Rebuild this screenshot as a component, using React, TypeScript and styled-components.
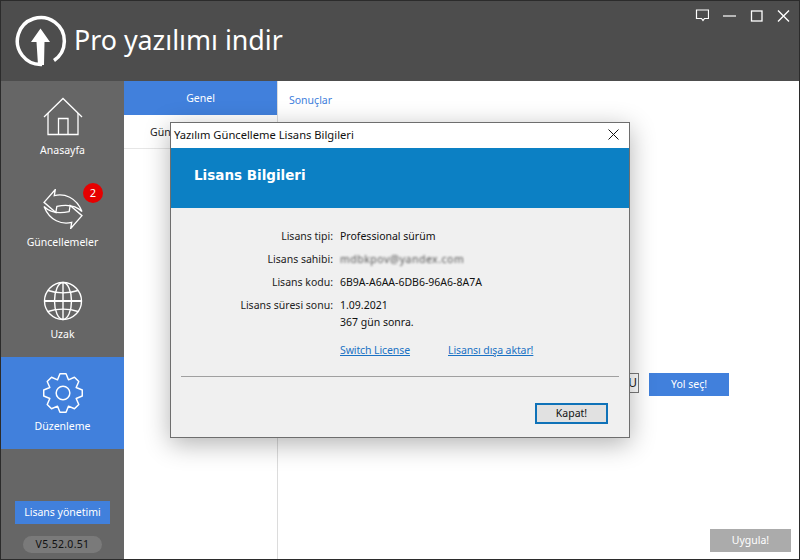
import styled, { createGlobalStyle } from "styled-components";

const GlobalStyle = createGlobalStyle`
    html, body {
        margin: 0;
        padding: 0;
        background: #fff;
    }
    * {
        box-sizing: border-box;
    }
`;

const Window = styled.div`
    position: relative;
    width: 800px;
    height: 560px;
    display: flex;
    flex-direction: column;
    border: 1px solid #2b2b2b;
    font-family: "Noto Sans", "Open Sans", sans-serif;
    font-size: 10.5px;
    overflow: hidden;
    background: #fff;
`;

const Header = styled.div`
    height: 80px;
    flex: none;
    background: #4d4d4d;
    display: flex;
    align-items: flex-start;
    padding: 14px 9px 0 14px;
`;

const AppTitle = styled.div`
    margin-left: 7px;
    margin-top: 3px;
    color: #fff;
    font-size: 26.8px;
    line-height: 44px;
`;

const WindowControls = styled.div`
    margin-left: auto;
    margin-top: -6px;
    display: flex;
    gap: 14px;
    align-items: center;
`;

const Body = styled.div`
    flex: 1;
    display: flex;
    min-height: 0;
`;

const Sidebar = styled.div`
    width: 123px;
    flex: none;
    background: #666666;
    display: flex;
    flex-direction: column;
    align-items: center;
`;

const NavItem = styled.div<{ $active?: boolean }>`
    position: relative;
    width: 100%;
    height: 92px;
    flex: none;
    padding-top: 16px;
    display: flex;
    flex-direction: column;
    align-items: center;
    gap: 5px;
    color: #fff;
    background: ${(p) => (p.$active ? "#4180dc" : "transparent")};
    line-height: 16px;
`;

const Badge = styled.div`
    position: absolute;
    left: 82px;
    top: 10px;
    width: 20px;
    height: 20px;
    border-radius: 50%;
    background: #e60000;
    color: #fff;
    font-size: 11px;
    line-height: 20px;
    text-align: center;
`;

const LicenseButton = styled.div`
    margin-top: 52px;
    width: 95px;
    height: 23px;
    background: #4180dc;
    color: #fff;
    line-height: 23px;
    text-align: center;
`;

const VersionPill = styled.div`
    margin-top: 12px;
    width: 79px;
    height: 17px;
    border-radius: 9px;
    background: #7a7a7a;
    color: #111;
    line-height: 17px;
    letter-spacing: 0.3px;
    text-align: center;
`;

const TabColumn = styled.div`
    width: 154px;
    flex: none;
    border-right: 1px solid #dcdcdc;
    background: #fff;
`;

const Tab = styled.div<{ $active?: boolean }>`
    height: 34px;
    line-height: 34px;
    padding-left: 26px;
    text-align: ${(p) => (p.$active ? "center" : "left")};
    padding-right: ${(p) => (p.$active ? "26px" : "0")};
    background: ${(p) => (p.$active ? "#4180dc" : "#fff")};
    color: ${(p) => (p.$active ? "#fff" : "#222")};
    border-bottom: ${(p) => (p.$active ? "none" : "1px solid #e6e6e6")};
`;

const Content = styled.div`
    flex: 1;
    display: flex;
    flex-direction: column;
    padding: 11px 8px 7px 11px;
`;

const ResultsLink = styled.div`
    color: #4180dc;
    line-height: 16px;
`;

const PathRow = styled.div`
    margin-top: 265px;
    display: flex;
    justify-content: flex-end;
    gap: 10px;
    padding-right: 62px;
`;

const PathInput = styled.div`
    width: 300px;
    height: 20px;
    border: 1px solid #7a7a7a;
    color: #222;
    font-size: 12px;
    line-height: 18px;
    text-align: right;
    padding-right: 1px;
`;

const BlueButton = styled.div`
    width: 80px;
    height: 23px;
    background: #4180dc;
    color: #fff;
    line-height: 23px;
    text-align: center;
`;

const ApplyRow = styled.div`
    margin-top: auto;
    display: flex;
    justify-content: flex-end;
`;

const ApplyButton = styled.div`
    width: 81px;
    height: 23px;
    background: #ababab;
    color: #fff;
    line-height: 23px;
    text-align: center;
`;

const Dialog = styled.div`
    position: absolute;
    left: 169px;
    top: 121px;
    width: 460px;
    height: 316px;
    display: flex;
    flex-direction: column;
    background: #f0f0f0;
    border: 1px solid #6e6e6e;
    box-shadow: 0 6px 24px rgba(0, 0, 0, 0.3);
`;

const DialogTitleBar = styled.div`
    height: 25px;
    flex: none;
    background: #fff;
    display: flex;
    align-items: center;
    justify-content: space-between;
    padding: 0 10px 2px 3px;
    color: #111;
    font-size: 11.2px;
`;

const DialogBanner = styled.div`
    height: 60px;
    flex: none;
    background: #0c80c4;
    color: #fff;
    font-family: "DejaVu Sans", sans-serif;
    font-size: 13.5px;
    font-weight: 700;
    line-height: 55px;
    padding-left: 23px;
`;

const InfoGrid = styled.div`
    margin-top: 20px;
    display: grid;
    grid-template-columns: 162px 1fr;
    column-gap: 7px;
    row-gap: 6px;
    color: #222;
    line-height: 17px;
`;

const InfoLabel = styled.div`
    text-align: right;
`;

const InfoValue = styled.div`
    color: #111;
`;

const BlurredValue = styled.div`
    color: #555;
    letter-spacing: 0.5px;
    filter: blur(1px);
`;

const LinkRow = styled.div`
    margin-top: 11px;
    margin-left: 169px;
    display: flex;
    gap: 38px;
    line-height: 16px;
    letter-spacing: -0.1px;
`;

const DialogLink = styled.span`
    color: #1a72c4;
    text-decoration: underline;
`;

const Divider = styled.div`
    margin: 18px 10px 0;
    height: 1px;
    background: #a0a0a0;
`;

const DialogFooter = styled.div`
    margin-top: 26px;
    display: flex;
    justify-content: flex-end;
    padding-right: 21px;
`;

const CloseButton = styled.div`
    width: 73px;
    height: 21px;
    border: 2px solid #0f72b8;
    background: #e1e1e1;
    color: #111;
    line-height: 17px;
    text-align: center;
`;

function gearPath() {
    const cx = 19;
    const cy = 19;
    const pts: string[] = [];
    for (let i = 0; i < 8; i++) {
        const a = (i * Math.PI) / 4 - Math.PI / 2;
        const step = Math.PI / 4;
        const seq: [number, number][] = [
            [13.5, -step * 0.5],
            [18.5, -step * 0.2],
            [18.5, step * 0.2],
            [13.5, step * 0.5],
        ];
        seq.forEach(([r, d]) => {
            pts.push(`${(cx + r * Math.cos(a + d)).toFixed(1)} ${(cy + r * Math.sin(a + d)).toFixed(1)}`);
        });
    }
    return "M" + pts.join("L") + "Z";
}

const syncArrow = "M0.5 13 L11.5 0.5 L10.5 6.5 C20 4 32 8 37.5 22 C31 15.5 22 15 13 17 L12 23 Z";

export default function App() {
    return (
        <Window>
            <GlobalStyle />
            <Header>
                <svg width="52" height="52" viewBox="0 0 52 52">
                    <path d="M27 49.5A23.5 23.5 0 1 1 39 45.5" fill="none" stroke="#fff" strokeWidth="3.5" />
                    <path d="M25.5 13.5 L35 27 H29.5 L29 50 H23 L21.5 27 H16 Z" fill="#fff" />
                </svg>
                <AppTitle>Pro yazılımı indir</AppTitle>
                <WindowControls>
                    <svg width="14" height="13" viewBox="0 0 14 13">
                        <path d="M1.5 1H13.5V9.5H9.5L8 11.5L6.5 9.5H1.5Z" fill="none" stroke="#fff" strokeWidth="1.2" />
                    </svg>
                    <svg width="13" height="12" viewBox="0 0 13 12">
                        <path d="M0 6H13" stroke="#fff" strokeWidth="1.2" />
                    </svg>
                    <svg width="13" height="12" viewBox="0 0 13 12">
                        <rect x="1.5" y="1" width="10.5" height="10" fill="none" stroke="#fff" strokeWidth="1.3" />
                    </svg>
                    <svg width="13" height="12" viewBox="0 0 13 12">
                        <path d="M1 0.5L12 11.5M12 0.5L1 11.5" stroke="#fff" strokeWidth="1.4" />
                    </svg>
                </WindowControls>
            </Header>
            <Body>
                <Sidebar>
                    <NavItem>
                        <svg width="40" height="40" viewBox="0 0 40 40" fill="none" stroke="#fff" strokeWidth="1.3">
                            <path d="M1 20L20 1.5L39 20" />
                            <path d="M5 16V37.5H35V16" />
                            <path d="M15.5 37.5V21.5H25V37.5" />
                        </svg>
                        Anasayfa
                    </NavItem>
                    <NavItem>
                        <svg width="40" height="40" viewBox="0 0 38 39" fill="none" stroke="#fff" strokeWidth="1.3">
                            <path d={syncArrow} />
                            <path d={syncArrow} transform="rotate(180 19 19.5)" />
                        </svg>
                        Güncellemeler
                        <Badge>2</Badge>
                    </NavItem>
                    <NavItem>
                        <svg width="40" height="40" viewBox="0 0 40 40" fill="none" stroke="#fff" strokeWidth="1.4">
                            <circle cx="20" cy="20" r="18.5" />
                            <ellipse cx="20" cy="20" rx="8.5" ry="18.5" />
                            <path d="M20 1.5V38.5" />
                            <path d="M1.5 20H38.5" strokeWidth="1.8" />
                            <path d="M5 9.5C14 12.5 26 12.5 35 9.5" />
                            <path d="M5 30.5C14 27.5 26 27.5 35 30.5" />
                        </svg>
                        Uzak
                    </NavItem>
                    <NavItem $active>
                        <svg width="40" height="40" viewBox="0 0 38 38" fill="none" stroke="#fff" strokeWidth="1.4" strokeLinejoin="round">
                            <path d={gearPath()} />
                            <circle cx="19" cy="19" r="6.5" />
                        </svg>
                        Düzenleme
                    </NavItem>
                    <LicenseButton>Lisans yönetimi</LicenseButton>
                    <VersionPill>V5.52.0.51</VersionPill>
                </Sidebar>
                <TabColumn>
                    <Tab $active>Genel</Tab>
                    <Tab>Güncelleme</Tab>
                </TabColumn>
                <Content>
                    <ResultsLink>Sonuçlar</ResultsLink>
                    <PathRow>
                        <PathInput>U</PathInput>
                        <BlueButton>Yol seç!</BlueButton>
                    </PathRow>
                    <ApplyRow>
                        <ApplyButton>Uygula!</ApplyButton>
                    </ApplyRow>
                </Content>
            </Body>
            <Dialog>
                <DialogTitleBar>
                    Yazılım Güncelleme Lisans Bilgileri
                    <svg width="11" height="11" viewBox="0 0 11 11">
                        <path d="M0.5 0.5L10.5 10.5M10.5 0.5L0.5 10.5" stroke="#111" strokeWidth="1" />
                    </svg>
                </DialogTitleBar>
                <DialogBanner>Lisans Bilgileri</DialogBanner>
                <InfoGrid>
                    <InfoLabel>Lisans tipi:</InfoLabel>
                    <InfoValue>Professional sürüm</InfoValue>
                    <InfoLabel>Lisans sahibi:</InfoLabel>
                    <BlurredValue>mdbkpov@yandex.com</BlurredValue>
                    <InfoLabel>Lisans kodu:</InfoLabel>
                    <InfoValue>6B9A-A6AA-6DB6-96A6-8A7A</InfoValue>
                    <InfoLabel>Lisans süresi sonu:</InfoLabel>
                    <InfoValue>
                        1.09.2021
                        <br />
                        367 gün sonra.
                    </InfoValue>
                </InfoGrid>
                <LinkRow>
                    <DialogLink>Switch License</DialogLink>
                    <DialogLink>Lisansı dışa aktar!</DialogLink>
                </LinkRow>
                <Divider />
                <DialogFooter>
                    <CloseButton>Kapat!</CloseButton>
                </DialogFooter>
            </Dialog>
        </Window>
    );
}
